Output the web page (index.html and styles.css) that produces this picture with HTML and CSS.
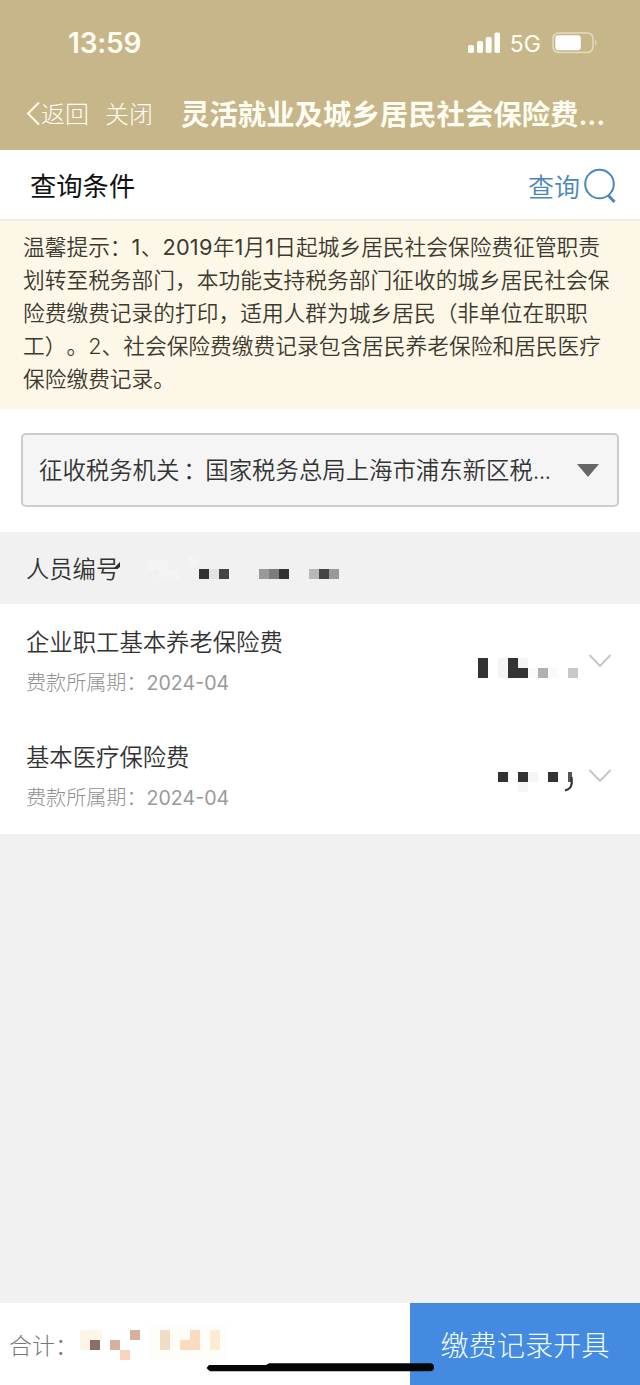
FILE: index.html
```html
<!DOCTYPE html>
<html lang="zh-CN">
<head>
<meta charset="utf-8">
<title>灵活就业及城乡居民社会保险费</title>
<link rel="stylesheet" href="styles.css">
</head>
<body>
<div class="page">
  <header class="header">
    <div class="status">
      <span class="time">13:59</span>
      <div class="signals">
        <svg class="bars" width="32" height="22" viewBox="0 0 32 22" fill="#fffef8"><rect x="0" y="13" width="6" height="8" rx="1.7"/><rect x="9" y="9" width="6" height="12" rx="1.7"/><rect x="17.7" y="5" width="6" height="16" rx="1.7"/><rect x="26.5" y="0.5" width="5.5" height="20.5" rx="1.7"/></svg>
        <span class="network">5G</span>
        <svg class="battery" width="46" height="22" viewBox="0 0 46 22"><rect x="1" y="1" width="40" height="19.5" rx="5.5" fill="none" stroke="#e6dcc0" stroke-width="1.5"/><rect x="3.3" y="3.3" width="25.5" height="15" rx="3" fill="#fff"/><path d="M43.2 7.5q2.6 3.2 0 6.5z" fill="#e6dcc0"/></svg>
      </div>
    </div>
    <nav class="nav">
      <svg class="back" width="14" height="26" viewBox="0 0 14 26" fill="none" stroke="#fffbe9" stroke-width="2"><path d="M13 1.500 2 12.500 13 23.500"/></svg>
      <span class="nav-link">返回</span>
      <span class="nav-link close">关闭</span>
      <h1 class="title">灵活就业及城乡居民社会保险费<span class="dots">...</span></h1>
    </nav>
  </header>

  <section class="query">
    <h2 class="query-title">查询条件</h2>
    <div class="query-action"><span>查询</span>
      <svg class="search" width="34" height="38" viewBox="0 0 34 38" fill="none" stroke="#4a87bd"><circle cx="16.500" cy="17" r="14.300" stroke-width="2"/><path d="m25 28 6.500 7" stroke-width="3"/></svg>
    </div>
  </section>

  <p class="notice">温馨提示：<span class="num">1</span>、<span class="num">2019</span>年<span class="num">1</span>月<span class="num">1</span>日起城乡居民社会保险费征管职责<br>划转至税务部门，本功能支持税务部门征收的城乡居民社会保<br>险费缴费记录的打印，适用人群为城乡居民（非单位在职职<br>工）。2、社会保险费缴费记录包含居民养老保险和居民医疗<br>保险缴费记录。</p>

  <section class="picker">
    <div class="select">
      <span class="select-text">征收税务机关<span class="colon">：</span>国家税务总局上海市浦东新区税<span class="dots">...</span></span>
      <svg width="22" height="13" viewBox="0 0 22 13"><path d="M0 0h22L11 13z" fill="#666"/></svg>
    </div>
  </section>

  <section class="person">
    <span class="person-label">人员编号</span>
    <svg class="person-mask" width="226" height="40" viewBox="0 0 226 40"><path d="m0 20 6-6v5l-3 2z" fill="#2e2e2e"/><path d="M34 12h20v10H34zM75 9h10v10H75zM45 22h20v9H45z" fill="#f4f4f4"/><path d="M85 21h10v10H85zM165 21h10v10h-10z" fill="#333"/><path d="M95 21h10v10H95z" fill="#e3e3e3"/><path d="M105 21h10v10h-10zM205 21h10v10h-10z" fill="#444"/><path d="M145 21h10v10h-10zM215 21h10v10h-10z" fill="#999"/><path d="M155 21h10v10h-10z" fill="#7c7c7c"/><path d="M195 21h10v10h-10z" fill="#b8b8b8"/></svg>
  </section>

  <ul class="list">
    <li class="item">
      <div class="item-info"><div class="item-name">企业职工基本养老保险费</div><div class="item-date">费款所属期：<span class="date">2024-04</span></div></div>
      <svg class="amount" width="102" height="32" viewBox="0 0 102 32"><path d="M0 0h10v20H0zM30 0h10v10h10v10H30z" fill="#333"/><path d="M20 0h10v20H20zM40 0h10v10H40z" fill="#f4f4f4"/><path d="M50 10h10v10H50zM70 10h10v10H70z" fill="#fafafa"/><path d="M60 10h10v10H60z" fill="#b0b0b0"/><path d="M90 10h10v10H90z" fill="#c8c8c8"/></svg>
      <svg class="chevron" width="24" height="14" viewBox="0 0 24 14" fill="none" stroke="#c8c8c8" stroke-width="2"><path d="m1.500 1 10.500 11L22.500 1"/></svg>
    </li>
    <li class="item">
      <div class="item-info"><div class="item-name">基本医疗保险费</div><div class="item-date">费款所属期：<span class="date">2024-04</span></div></div>
      <svg class="amount" width="102" height="32" viewBox="0 0 102 32"><path d="M20 0h10v10H20zM40 0h10v10H40zM70 0h10v10H70z" fill="#333"/><path d="M40 10h10v10H40zM50 0h10v10H50z" fill="#f5f5f5"/><path d="M90 0h4v10h-4z" fill="#555"/><path d="M93.500 5q2 12-6.500 13.500" fill="none" stroke="#333" stroke-width="2"/></svg>
      <svg class="chevron" width="24" height="14" viewBox="0 0 24 14" fill="none" stroke="#c8c8c8" stroke-width="2"><path d="m1.500 1 10.500 11L22.500 1"/></svg>
    </li>
  </ul>

  <footer class="footer">
    <div class="total">
      <span class="total-label">合计：</span>
      <svg class="total-mask" width="150" height="40" viewBox="0 0 150 40"><path d="M0 6h22v10H10v10H0z" fill="#fdf5e8"/><path d="M70 0h76v35H70z" fill="#fffdfa"/><path d="M10 16h10v10H10z" fill="#8d6e63"/><path d="M30 16h10v10H30zM50 6h10v10H50z" fill="#d3b19d"/><path d="M40 26h10v10H40z" fill="#f9d3bb"/><path d="M80 6h10v20H80z" fill="#f1dcc6"/><path d="M110 6h10v20h-20V16h10z" fill="#fbdac0"/><path d="M130 6h10v20h-10z" fill="#fdebd4"/></svg>
    </div>
    <button class="submit">缴费记录开具</button>
    <svg class="home-bar" width="230" height="10" viewBox="0 0 230 10"><path d="M3 2h57l3-1.700h161q4 0 4 4t-4 4H4L2 6.500.500 5z" fill="#050608"/></svg>
  </footer>
</div>
</body>
</html>
```
FILE: styles.css
```css
* { box-sizing: border-box; }
body {
  margin: 0;
  background: #f1f1f1;
  font-family: Inter, "Noto Sans CJK SC", sans-serif;
  font-weight: 350;
  color: #333;
  text-spacing-trim: space-all;
}
svg { display: block; flex: none; }
h1, h2, p, ul { margin: 0; padding: 0; list-style: none; }
.page { width: 640px; height: 1385px; display: flex; flex-direction: column; white-space: nowrap; overflow: hidden; }

.header { height: 150px; background: #c6b68a; color: #fffdf2; }
.status { height: 86px; padding: 0 42px 0 68px; display: flex; align-items: center; justify-content: space-between; }
.time { font-size: 28px; font-weight: 600; line-height: 34px; letter-spacing: -0.200px; }
.signals { display: flex; align-items: center; }
.network { font-size: 23px; line-height: 30px; margin: 2px 11px 0 10px; font-weight: 400; }
.nav { height: 56px; padding-left: 26px; display: flex; align-items: center; }
.nav-link { font-size: 24px; font-weight: 300; line-height: 34px; margin-left: 1px; padding-top: 1px; }
.close { margin-left: 16px; }
.title { margin-left: 28px; font-size: 28.400px; line-height: 40px; font-weight: 600; padding-top: 1px; }
.title .dots { letter-spacing: -0.200px; }

.query { height: 71px; padding: 2px 23px 0 30px; background: #fff; border-bottom: 2px solid #eeeee6; display: flex; align-items: center; justify-content: space-between; }
.query-title { font-size: 26.300px; font-weight: 400; line-height: 38px; padding-top: 3px; color: #111; }
.query-action { display: flex; align-items: center; gap: 3px; font-size: 26px; line-height: 38px; padding-top: 4px; color: #4a87bd; }
.search { margin-top: -4px; }

.notice { height: 188px; padding: 10px 0 0 23px; background: #fcf7e7; font-size: 21.720px; line-height: 33px; color: #3c392f; }
.num { font-weight: 400; letter-spacing: 0.250px; }

.picker { height: 123px; padding: 24px 21px 25px; background: #fff; }
.select { height: 74px; padding: 0 18px 0 16px; border: 2px solid #ccc; border-radius: 5px; background: #f5f5f5; display: flex; align-items: center; justify-content: space-between; }
.select-text { font-size: 23.400px; line-height: 34px; padding-top: 2px; }
.select .dots { letter-spacing: -0.700px; }
.colon { display: inline-block; width: 26px; padding-left: 4px; }

.person { height: 72px; padding-left: 26px; display: flex; align-items: center; font-size: 23.300px; }
.person-label { width: 88px; }

.list { height: 230px; background: #fff; }
.item { height: 115px; padding-left: 26px; display: flex; }
.item-info { flex: 1; padding-top: 22px; }
.item-name { font-size: 23.350px; line-height: 34px; }
.item-date { margin-top: 8px; font-size: 20.100px; line-height: 30px; color: #8f8f8f; font-weight: 300; }
.date { font-size: 19.600px; font-weight: 400; color: #999; }
.amount { margin-top: 54px; }
.item + .item .amount { margin-top: 53px; }
.chevron { margin: 50px 28px 0 8px; }

.footer { position: relative; height: 82px; margin-top: auto; background: #fff; display: flex; }
.total { flex: 1; padding: 0 0 0 9px; display: flex; align-items: center; font-size: 23px; font-weight: 300; color: #777; }
.total-mask { margin-left: 2px; }
.submit { width: 230px; border: 0; padding: 0 0 2px; background: #438ae0; color: #effdff; font-family: inherit; font-size: 28.200px; font-weight: 300; }
.home-bar { position: absolute; left: 206px; top: 60px; }
```
